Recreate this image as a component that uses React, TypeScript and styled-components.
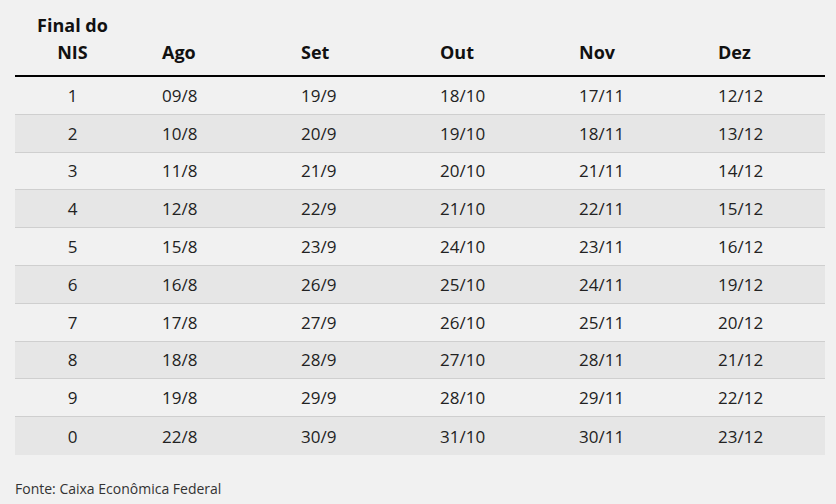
import React from "react";
import styled, { createGlobalStyle } from "styled-components";

const Global = createGlobalStyle`
  html, body { margin: 0; padding: 0; background: #f1f1f1; }
  body { font-family: "Open Sans", "Noto Sans", sans-serif; color: #222; }
`;

const Page = styled.div`
  width: 836px;
  height: 504px;
  box-sizing: border-box;
  padding: 0 11px 0 15px;
  background: #f1f1f1;
`;

const Table = styled.div`
  width: 810px;
  display: grid;
  grid-template-columns: 115px repeat(5, 139px);
`;

const HeadCell = styled.div<{ $first?: boolean }>`
  display: flex;
  align-items: flex-end;
  justify-content: ${(p) => (p.$first ? "center" : "flex-start")};
  text-align: ${(p) => (p.$first ? "center" : "left")};
  padding: 0 0 9px ${(p) => (p.$first ? "0" : "32px")};
  height: 77px;
  box-sizing: border-box;
  border-bottom: 2px solid #000;
  font-weight: 700;
  font-size: 18px;
  line-height: 27px;
  color: #111;
`;

const Cell = styled.div<{ $first?: boolean; $alt?: boolean; $last?: boolean }>`
  height: 37.8px;
  box-sizing: border-box;
  display: flex;
  align-items: center;
  justify-content: ${(p) => (p.$first ? "center" : "flex-start")};
  padding-left: ${(p) => (p.$first ? "0" : "32px")};
  background: ${(p) => (p.$alt ? "#e6e6e6" : "#f1f1f1")};
  border-bottom: ${(p) => (p.$last ? "none" : "1px solid #cfcfcf")};
  font-size: 17px;
  color: #222;
`;

const Source = styled.div`
  margin-top: 24px;
  font-size: 14px;
  color: #333;
`;

const months = ["Ago", "Set", "Out", "Nov", "Dez"];
const rows: [string, string[]][] = [
  ["1", ["09/8", "19/9", "18/10", "17/11", "12/12"]],
  ["2", ["10/8", "20/9", "19/10", "18/11", "13/12"]],
  ["3", ["11/8", "21/9", "20/10", "21/11", "14/12"]],
  ["4", ["12/8", "22/9", "21/10", "22/11", "15/12"]],
  ["5", ["15/8", "23/9", "24/10", "23/11", "16/12"]],
  ["6", ["16/8", "26/9", "25/10", "24/11", "19/12"]],
  ["7", ["17/8", "27/9", "26/10", "25/11", "20/12"]],
  ["8", ["18/8", "28/9", "27/10", "28/11", "21/12"]],
  ["9", ["19/8", "29/9", "28/10", "29/11", "22/12"]],
  ["0", ["22/8", "30/9", "31/10", "30/11", "23/12"]],
];

export default function App() {
  return (
    <>
      <Global />
      <Page>
        <Table>
          <HeadCell $first>
            Final do
            <br />
            NIS
          </HeadCell>
          {months.map((m) => (
            <HeadCell key={m}>{m}</HeadCell>
          ))}
          {rows.map(([nis, vals], i) => {
            const alt = i % 2 === 1;
            const last = i === rows.length - 1;
            return (
              <React.Fragment key={nis}>
                <Cell $first $alt={alt} $last={last}>
                  {nis}
                </Cell>
                {vals.map((v, j) => (
                  <Cell key={j} $alt={alt} $last={last}>
                    {v}
                  </Cell>
                ))}
              </React.Fragment>
            );
          })}
        </Table>
        <Source>Fonte: Caixa Econômica Federal</Source>
      </Page>
    </>
  );
}
